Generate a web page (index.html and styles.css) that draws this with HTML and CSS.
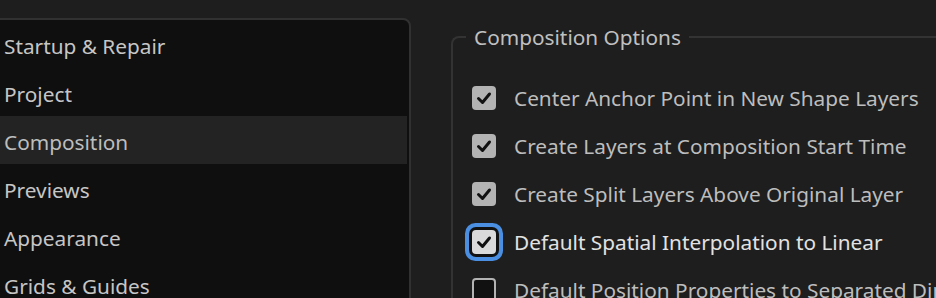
FILE: index.html
```html
<!DOCTYPE html>
<html lang="en">
<head>
    <meta charset="UTF-8">
    <meta name="viewport" content="width=device-width, initial-scale=1.0">
    <title>Preferences - Composition</title>
    <link rel="stylesheet" href="styles.css">
</head>
<body>
    <div class="prefs">
        <ul class="sidebar">
            <li>Startup &amp; Repair</li>
            <li>Project</li>
            <li class="selected">Composition</li>
            <li>Previews</li>
            <li>Appearance</li>
            <li>Grids &amp; Guides</li>
        </ul>
        <fieldset class="group">
            <legend>Composition Options</legend>
            <label class="option">
                <span class="box checked"><svg viewBox="0 0 24 24"><path d="M6.5 12.5 L10.5 16.5 L17.5 8"/></svg></span>
                Center Anchor Point in New Shape Layers
            </label>
            <label class="option">
                <span class="box checked"><svg viewBox="0 0 24 24"><path d="M6.5 12.5 L10.5 16.5 L17.5 8"/></svg></span>
                Create Layers at Composition Start Time
            </label>
            <label class="option">
                <span class="box checked"><svg viewBox="0 0 24 24"><path d="M6.5 12.5 L10.5 16.5 L17.5 8"/></svg></span>
                Create Split Layers Above Original Layer
            </label>
            <label class="option focused">
                <span class="box checked"><svg viewBox="0 0 24 24"><path d="M6.5 12.5 L10.5 16.5 L17.5 8"/></svg></span>
                Default Spatial Interpolation to Linear
            </label>
            <label class="option">
                <span class="box"></span>
                Default Position Properties to Separated Dimensions
            </label>
        </fieldset>
    </div>
</body>
</html>
```

FILE: styles.css
```css
body {
    margin: 0;
    background: #1e1e1e;
    font-family: "Noto Sans", "Open Sans", sans-serif;
    overflow: hidden;
    height: 298px;
}
.prefs {
    display: flex;
    align-items: flex-start;
}
.sidebar {
    list-style: none;
    margin: 18px 0 0 -8px;
    padding: 0;
    width: 415px;
    height: 400px;
    flex-shrink: 0;
    background: #0f0f0f;
    border: 2px solid #313131;
    border-radius: 8px;
}
.sidebar li {
    height: 48px;
    line-height: 52px;
    padding-left: 10px;
    margin-right: 2px;
    font-size: 20.8px;
    color: #c6c6c6;
    white-space: nowrap;
}
.sidebar li.selected {
    background: #232323;
    color: #bdbdbd;
}
.group {
    margin: 25px 0 0 40px;
    padding: 25px 0 0 19px;
    border: 2px solid #333;
    border-right: none;
    border-radius: 8px 0 0 0;
    flex: 1;
    min-width: 0;
}
.group legend {
    margin-left: -6px;
    padding: 0 8px;
    font-size: 20.8px;
    line-height: 24px;
    color: #c0c0c0;
}
.option {
    display: flex;
    align-items: center;
    gap: 18px;
    height: 48px;
    font-size: 20.8px;
    color: #bdbdbd;
    white-space: nowrap;
}
.box {
    width: 24px;
    height: 24px;
    flex-shrink: 0;
    box-sizing: border-box;
    border-radius: 4px;
    border: 2px solid #b3b3b3;
    background: #111;
}
.box.checked {
    border: none;
    background: #b3b3b3;
}
.box svg {
    width: 24px;
    height: 24px;
    display: block;
    fill: none;
    stroke: #111;
    stroke-width: 3;
    stroke-linecap: round;
    stroke-linejoin: round;
}
.option.focused {
    color: #e2e2e2;
}
.option.focused .box {
    background: #dadada;
    box-shadow: 0 0 0 3px #111, 0 0 0 7px #4a8fe2;
}
```
